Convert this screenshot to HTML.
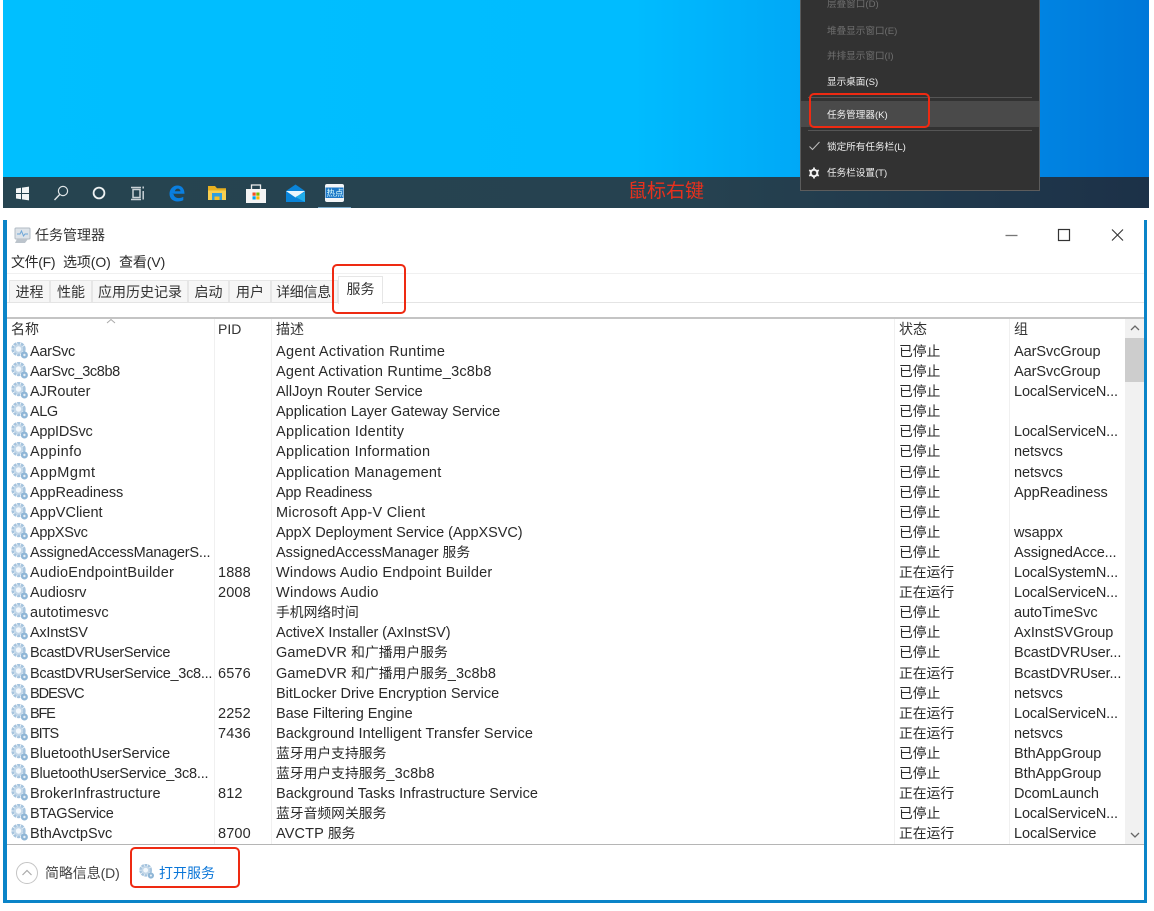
<!DOCTYPE html>
<html lang="zh-CN"><head><meta charset="utf-8"><title>任务管理器</title>
<style>
html,body{margin:0;padding:0;background:#fff}
body{width:1154px;height:911px;position:relative;overflow:hidden;font-family:"Liberation Sans","Noto Sans CJK SC",sans-serif;color:#2a2a2a;font-size:14px;filter:blur(.35px)}
.abs,.r span,.m,.t{position:absolute;white-space:nowrap}
#desk{position:absolute;left:3px;top:0;width:1146px;height:177px;background:linear-gradient(90deg,#00bfff 0,#00bcff 55%,#00a5f5 72%,#0089e6 86%,#0078d9 100%)}
#bar{position:absolute;left:3px;top:177px;width:1146px;height:31px;background:linear-gradient(90deg,#264450 0,#264250 60%,#1c3148 100%)}
#menu{position:absolute;left:800px;top:0;width:240px;height:191px;background:#323232;border:solid #5c5c5c;border-width:0 1px 1px 1px;box-sizing:border-box}
.m{left:827px;font-size:9.6px;color:#f0f0f0;line-height:14px}
.dis{color:#6f6f6f}
#win{position:absolute;left:3px;top:220px;width:1144px;height:683px;border:solid #0a84c8;border-width:0 3px 3px 4px;box-sizing:border-box;background:#fff}
.r{position:absolute;left:0;width:1125px;height:20px;line-height:20px;font-size:14.5px}
.r svg{position:absolute;left:11px;top:0;width:18px;height:18px}
.r span{top:0;letter-spacing:.13px}
.r i{font-style:normal;font-size:13.8px;letter-spacing:0}
.a{left:30px}.b{left:218px}.c{left:276px}.r .d{left:899px;font-size:13.8px;letter-spacing:0}.r .e{left:1014px;letter-spacing:-.05px}
.r .e.n{letter-spacing:-.1px}.r .a.n{letter-spacing:-.2px}
.t{top:280px;height:23px;line-height:23px;text-align:center;background:#f6f6f6;border:1px solid #e6e6e6;border-bottom:0;box-sizing:border-box;color:#333}
.h{top:319px;line-height:20px;color:#333}
.v{position:absolute;top:319px;width:1px;height:525px;background:#f0f0f0}
.red{position:absolute;border:2.5px solid #ee2a12;border-radius:5px;box-sizing:border-box}
</style></head><body>
<svg width="0" height="0" style="position:absolute"><defs>
<symbol id="g" viewBox="0 0 18 18"><circle cx="7.500" cy="7" r="5.800" fill="none" stroke="#a6c4de" stroke-width="2.800" stroke-dasharray="3 .7"/><circle cx="7.500" cy="7" r="4.600" fill="#c4d8e9"/><circle cx="7.500" cy="7" r="2.700" fill="#f3f8fc"/><circle cx="13.400" cy="13" r="3.500" fill="#8fb6d6"/><circle cx="13.400" cy="13" r="1.200" fill="#e7eff6"/></symbol>
</defs></svg>

<div id="desk"></div>
<div id="bar"></div>
<svg class="abs" style="left:15px;top:184px" width="340" height="24" viewBox="0 0 340 24">
<path d="M1 4.500 6 3.800V9H1zM7 3.600 14 2.600V9H7zM1 10H6V15.200L1 14.500zM7 10H14V16.400L7 15.400z" fill="#f2f5f6"/>
<circle cx="48" cy="7" r="4.600" fill="none" stroke="#dfe5e7" stroke-width="1.200"/><path d="M44.700 10.500 39.500 16" stroke="#dfe5e7" stroke-width="1.400"/>
<circle cx="84" cy="9" r="5.400" fill="none" stroke="#eef2f3" stroke-width="1.800"/>
<path d="M118 5.500h7v8h-7zM116 3.500h10M116 15.500h10M128.200 2.500v2M128.200 7v8.500" fill="none" stroke="#c9d2d6" stroke-width="1.500"/>
<path d="M156.500 9.800h13c0-5-2.700-8.300-7-8.300-4.800 0-8 3.800-8 8.300 0 4.900 3.500 7.700 8 7.700 2.200 0 4.300-.5 5.800-1.400v-3.200c-3.800 2-9 1.700-9.800-2.900z M159.800 7.300c.5-1.900 1.700-2.700 3-2.700 1.500 0 2.500 1 2.700 2.700z" fill="#0a7fe0" fill-rule="evenodd"/>
<path d="M193 2h7l2 2.200h9v3.300h-18z" fill="#e8b020"/><path d="M193 6.500h18v9.500h-18z" fill="#f7cf51"/><path d="M197 9h10v7h-10z" fill="#2f9fe0"/><path d="M199.500 12.500h5v3.500h-5z" fill="#f4bf2a"/>
<path d="M231 5h20v14h-20z" fill="#f4f4f4"/><path d="M236.500 5V1h9v4" fill="none" stroke="#eee" stroke-width="1.300"/><path d="M237.500 8.500h3.200v3.200h-3.200z" fill="#f25022"/><path d="M241.300 8.500h3.200v3.200h-3.200z" fill="#7fba00"/><path d="M237.500 12.300h3.200v3.200h-3.200z" fill="#00a4ef"/><path d="M241.300 12.300h3.200v3.200h-3.200z" fill="#ffb900"/>
<path d="M271 7 280.500 0.500 290 7V18h-19z" fill="#0a84d8"/><path d="M271 7h19l-9.500 6.500z" fill="#eaf6fc"/><path d="M280.500 13 290 8v10z" fill="#21aeea"/>
<rect x="310" y="0" width="19" height="18" rx="2" fill="#f3f6f8"/><rect x="310.500" y="3.500" width="18" height="10.500" fill="#1c78c8"/>
</svg>
<div class="abs" style="left:326px;top:188px;width:18px;text-align:center;font-size:8.500px;line-height:10px;color:#dff;white-space:nowrap">热点</div>
<div class="abs" style="left:318px;top:207px;width:33px;height:1px;background:#76a9c9"></div>
<div class="abs" style="left:628px;top:181px;font-size:19px;line-height:22px;color:#e9301c">鼠标右键</div>

<div id="menu"></div>
<div class="m dis" style="top:-2px">层叠窗口(D)</div>
<div class="m dis" style="top:25px">堆叠显示窗口(E)</div>
<div class="m dis" style="top:50px">并排显示窗口(I)</div>
<div class="m" style="top:76px">显示桌面(S)</div>
<div class="abs" style="left:808px;top:97px;width:224px;height:1px;background:#555"></div>
<div class="abs" style="left:801px;top:101px;width:238px;height:26px;background:#4a4a4a"></div>
<div class="m" style="top:109px">任务管理器(K)</div>
<div class="abs" style="left:808px;top:130px;width:224px;height:1px;background:#555"></div>
<div class="m" style="top:141px">锁定所有任务栏(L)</div>
<div class="m" style="top:167px">任务栏设置(T)</div>
<svg class="abs" style="left:808px;top:140px" width="14" height="12" viewBox="0 0 14 12"><path d="M1.500 6.500 4.500 9.500 11.500 2" fill="none" stroke="#bdbdbd" stroke-width="1"/></svg>
<svg class="abs" style="left:807px;top:166px" width="14" height="14" viewBox="0 0 14 14"><circle cx="7" cy="7" r="3.300" fill="none" stroke="#f2f2f2" stroke-width="2"/><path d="M7 1.500v2M7 10.500v2M2.200 4.200l1.800 1M10 8.800l1.800 1M2.200 9.800l1.800-1M10 5.200l1.800-1" stroke="#f2f2f2" stroke-width="1.800"/></svg>
<div class="red" style="left:809px;top:93px;width:121px;height:35px"></div>

<div id="win"></div>
<svg class="abs" style="left:14px;top:226px" width="18" height="18" viewBox="0 0 18 18"><rect x="1" y="2" width="15" height="11" rx="1" fill="#dde3e9" stroke="#b2bbc4"/><path d="M3 8h3l1.500-3 2 5 1.500-2h3" fill="none" stroke="#6ca6d8"/><path d="M3 13 1 17h10l3-4z" fill="#bcc4cc"/></svg>
<div class="abs" style="left:35px;top:225px;font-size:14px;line-height:20px;color:#333">任务管理器</div>
<svg class="abs" style="left:1000px;top:224px" width="132" height="22" viewBox="0 0 132 22"><path d="M5.500 11.500h12" stroke="#777" stroke-width="1.300"/><rect x="58.500" y="5.500" width="11" height="11" fill="none" stroke="#333" stroke-width="1.200"/><path d="M112 5.500 123 16.500M123 5.500 112 16.500" stroke="#333" stroke-width="1.100"/></svg>
<div class="abs" style="left:11px;top:252px;line-height:20px;letter-spacing:-.35px">文件(F)</div>
<div class="abs" style="left:63px;top:252px;line-height:20px;letter-spacing:-.1px">选项(O)</div>
<div class="abs" style="left:119px;top:252px;line-height:20px;letter-spacing:-.1px">查看(V)</div>
<div class="abs" style="left:7px;top:273px;width:1137px;height:1px;background:#f0f0f0"></div>

<div class="t" style="left:9px;width:41px">进程</div>
<div class="t" style="left:50px;width:42px">性能</div>
<div class="t" style="left:92px;width:96px">应用历史记录</div>
<div class="t" style="left:188px;width:41px">启动</div>
<div class="t" style="left:229px;width:42px">用户</div>
<div class="t" style="left:271px;width:67px;padding-right:2px;letter-spacing:-.3px">详细信息</div>
<div class="t" style="left:338px;top:276px;width:45px;height:28px;background:#fff;line-height:25px;z-index:2">服务</div>
<div class="abs" style="left:7px;top:302px;width:1137px;height:1px;background:#e4e4e4"></div>
<div class="abs" style="left:7px;top:317px;width:1137px;height:2px;background:#c4c4c4"></div>
<div class="red" style="left:332px;top:264px;width:74px;height:50px;z-index:3"></div>

<div class="v" style="left:214px"></div><div class="v" style="left:271px"></div><div class="v" style="left:894px"></div><div class="v" style="left:1009px"></div>
<div class="abs h" style="left:11px">名称</div><div class="abs h" style="left:218px">PID</div><div class="abs h" style="left:276px">描述</div><div class="abs h" style="left:899px">状态</div><div class="abs h" style="left:1014px">组</div>
<svg class="abs" style="left:105px;top:318px" width="12" height="6" viewBox="0 0 12 6"><path d="M2 5 6 1.500 10 5" fill="none" stroke="#aaa"/></svg>

<div class="abs" style="left:1125px;top:319px;width:19px;height:525px;background:#f1f1f1"></div>
<div class="abs" style="left:1125px;top:338px;width:19px;height:44px;background:#cdcdcd"></div>
<svg class="abs" style="left:1129px;top:323px" width="12" height="10" viewBox="0 0 12 10"><path d="M2 7 6 3l4 4" fill="none" stroke="#666" stroke-width="1.300"/></svg>
<svg class="abs" style="left:1129px;top:830px" width="12" height="10" viewBox="0 0 12 10"><path d="M2 3l4 4 4-4" fill="none" stroke="#666" stroke-width="1.300"/></svg>

<div class="r" style="top:342px"><svg><use href="#g"/></svg><span class="a" style="letter-spacing:-.3px">AarSvc</span><span class="c" style="letter-spacing:.3px">Agent Activation Runtime</span><span class="d">已停止</span><span class="e">AarSvcGroup</span></div>
<div class="r" style="top:362px"><svg><use href="#g"/></svg><span class="a" style="letter-spacing:-.37px">AarSvc_3c8b8</span><span class="c" style="letter-spacing:.2px">Agent Activation Runtime_3c8b8</span><span class="d">已停止</span><span class="e">AarSvcGroup</span></div>
<div class="r" style="top:382px"><svg><use href="#g"/></svg><span class="a" style="letter-spacing:0">AJRouter</span><span class="c" style="letter-spacing:0">AllJoyn Router Service</span><span class="d">已停止</span><span class="e n">LocalServiceN...</span></div>
<div class="r" style="top:402px"><svg><use href="#g"/></svg><span class="a" style="letter-spacing:-.4px">ALG</span><span class="c" style="letter-spacing:-.02px">Application Layer Gateway Service</span><span class="d">已停止</span></div>
<div class="r" style="top:422px"><svg><use href="#g"/></svg><span class="a" style="letter-spacing:-.25px">AppIDSvc</span><span class="c" style="letter-spacing:.33px">Application Identity</span><span class="d">已停止</span><span class="e n">LocalServiceN...</span></div>
<div class="r" style="top:442px"><svg><use href="#g"/></svg><span class="a" style="letter-spacing:.4px">Appinfo</span><span class="c" style="letter-spacing:.3px">Application Information</span><span class="d">已停止</span><span class="e">netsvcs</span></div>
<div class="r" style="top:463px"><svg><use href="#g"/></svg><span class="a" style="letter-spacing:.5px">AppMgmt</span><span class="c" style="letter-spacing:.27px">Application Management</span><span class="d">已停止</span><span class="e">netsvcs</span></div>
<div class="r" style="top:483px"><svg><use href="#g"/></svg><span class="a" style="letter-spacing:-.1px">AppReadiness</span><span class="c" style="letter-spacing:-.17px">App Readiness</span><span class="d">已停止</span><span class="e">AppReadiness</span></div>
<div class="r" style="top:503px"><svg><use href="#g"/></svg><span class="a" style="letter-spacing:0">AppVClient</span><span class="c" style="letter-spacing:.27px">Microsoft App-V Client</span><span class="d">已停止</span></div>
<div class="r" style="top:523px"><svg><use href="#g"/></svg><span class="a" style="letter-spacing:-.3px">AppXSvc</span><span class="c" style="letter-spacing:-.05px">AppX Deployment Service (AppXSVC)</span><span class="d">已停止</span><span class="e">wsappx</span></div>
<div class="r" style="top:543px"><svg><use href="#g"/></svg><span class="a n">AssignedAccessManagerS...</span><span class="c" style="letter-spacing:-.05px">AssignedAccessManager <i>服务</i></span><span class="d">已停止</span><span class="e n">AssignedAcce...</span></div>
<div class="r" style="top:563px"><svg><use href="#g"/></svg><span class="a" style="letter-spacing:.23px">AudioEndpointBuilder</span><span class="b">1888</span><span class="c" style="letter-spacing:.23px">Windows Audio Endpoint Builder</span><span class="d">正在运行</span><span class="e n">LocalSystemN...</span></div>
<div class="r" style="top:583px"><svg><use href="#g"/></svg><span class="a" style="letter-spacing:0">Audiosrv</span><span class="b">2008</span><span class="c" style="letter-spacing:.28px">Windows Audio</span><span class="d">正在运行</span><span class="e n">LocalServiceN...</span></div>
<div class="r" style="top:603px"><svg><use href="#g"/></svg><span class="a">autotimesvc</span><span class="c"><i>手机网络时间</i></span><span class="d">已停止</span><span class="e">autoTimeSvc</span></div>
<div class="r" style="top:623px"><svg><use href="#g"/></svg><span class="a" style="letter-spacing:-.25px">AxInstSV</span><span class="c" style="letter-spacing:-.1px">ActiveX Installer (AxInstSV)</span><span class="d">已停止</span><span class="e">AxInstSVGroup</span></div>
<div class="r" style="top:643px"><svg><use href="#g"/></svg><span class="a" style="letter-spacing:-.3px">BcastDVRUserService</span><span class="c">GameDVR <i>和广播用户服务</i></span><span class="d">已停止</span><span class="e n">BcastDVRUser...</span></div>
<div class="r" style="top:664px"><svg><use href="#g"/></svg><span class="a" style="letter-spacing:-.28px">BcastDVRUserService_3c8...</span><span class="b">6576</span><span class="c">GameDVR <i>和广播用户服务</i>_3c8b8</span><span class="d">正在运行</span><span class="e n">BcastDVRUser...</span></div>
<div class="r" style="top:684px"><svg><use href="#g"/></svg><span class="a" style="letter-spacing:-1px">BDESVC</span><span class="c" style="letter-spacing:0">BitLocker Drive Encryption Service</span><span class="d">已停止</span><span class="e">netsvcs</span></div>
<div class="r" style="top:704px"><svg><use href="#g"/></svg><span class="a" style="letter-spacing:-1.2px">BFE</span><span class="b">2252</span><span class="c" style="letter-spacing:-.06px">Base Filtering Engine</span><span class="d">正在运行</span><span class="e n">LocalServiceN...</span></div>
<div class="r" style="top:724px"><svg><use href="#g"/></svg><span class="a" style="letter-spacing:-1px">BITS</span><span class="b">7436</span><span class="c" style="letter-spacing:.1px">Background Intelligent Transfer Service</span><span class="d">正在运行</span><span class="e">netsvcs</span></div>
<div class="r" style="top:744px"><svg><use href="#g"/></svg><span class="a" style="letter-spacing:0">BluetoothUserService</span><span class="c"><i>蓝牙用户支持服务</i></span><span class="d">已停止</span><span class="e">BthAppGroup</span></div>
<div class="r" style="top:764px"><svg><use href="#g"/></svg><span class="a n">BluetoothUserService_3c8...</span><span class="c"><i>蓝牙用户支持服务</i>_3c8b8</span><span class="d">已停止</span><span class="e">BthAppGroup</span></div>
<div class="r" style="top:784px"><svg><use href="#g"/></svg><span class="a">BrokerInfrastructure</span><span class="b">812</span><span class="c" style="letter-spacing:.05px">Background Tasks Infrastructure Service</span><span class="d">正在运行</span><span class="e">DcomLaunch</span></div>
<div class="r" style="top:804px"><svg><use href="#g"/></svg><span class="a" style="letter-spacing:-.3px">BTAGService</span><span class="c"><i>蓝牙音频网关服务</i></span><span class="d">已停止</span><span class="e n">LocalServiceN...</span></div>
<div class="r" style="top:824px"><svg><use href="#g"/></svg><span class="a" style="letter-spacing:.03px">BthAvctpSvc</span><span class="b">8700</span><span class="c">AVCTP <i>服务</i></span><span class="d">正在运行</span><span class="e">LocalService</span></div>

<div class="abs" style="left:7px;top:844px;width:1137px;height:1px;background:#b5b5b5"></div>
<div class="abs" style="left:7px;top:845px;width:1137px;height:55px;background:#fff"></div>
<svg class="abs" style="left:15px;top:861px" width="24" height="24" viewBox="0 0 24 24"><circle cx="12" cy="12" r="10.500" fill="#fff" stroke="#c4c4c4"/><path d="M7.500 14 12 9.500l4.500 4.500" fill="none" stroke="#aaa" stroke-width="1.200"/></svg>
<div class="abs" style="left:45px;top:863px;line-height:20px;color:#444;letter-spacing:-.1px">简略信息(D)</div>
<svg class="abs" style="left:139px;top:864px" width="16" height="16" viewBox="0 0 18 18"><use href="#g"/></svg>
<div class="abs" style="left:159px;top:863px;line-height:20px;color:#0a76d8">打开服务</div>
<div class="red" style="left:130px;top:847px;width:110px;height:41px;z-index:3"></div>
</body></html>
